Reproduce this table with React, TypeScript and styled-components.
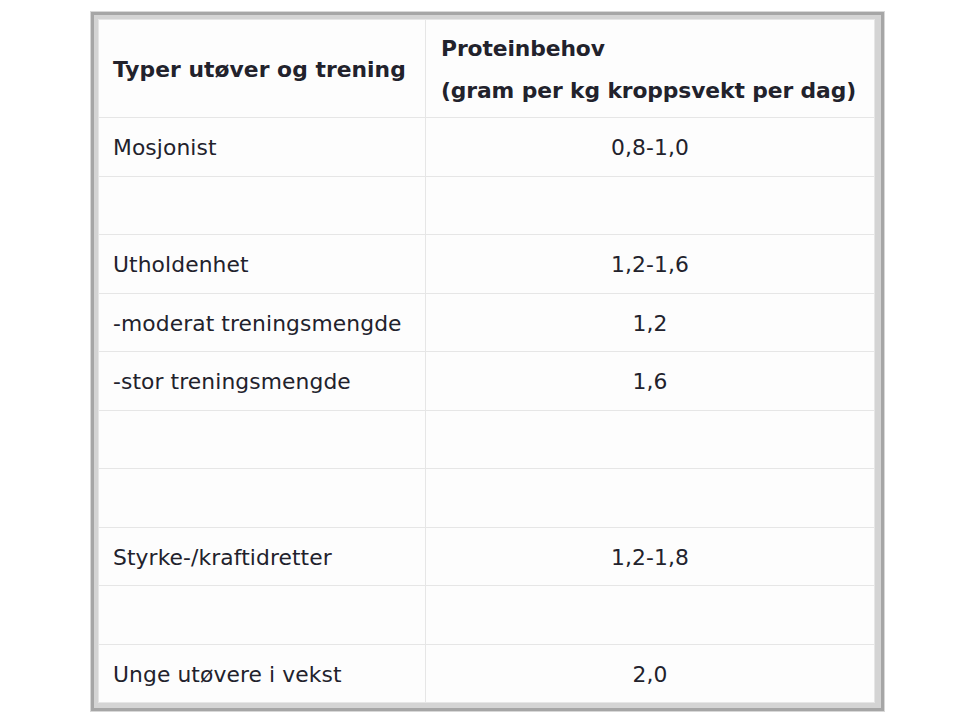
import React from "react";
import styled, { createGlobalStyle } from "styled-components";

const Global = createGlobalStyle`
  html, body { margin: 0; padding: 0; background: #ffffff; }
  body { font-family: "DejaVu Sans", Verdana, sans-serif; }
`;

const Page = styled.div`
  width: 960px;
  height: 720px;
  padding: 12px 0 0 91px;
  box-sizing: border-box;
`;

const Frame = styled.div`
  display: inline-block;
  border: 3px solid #a6a6a6;
  padding: 4px 6px 5px 4px;
  background: #d4d4d4;
  box-shadow: 0 0 0 1px #d8d8d8;
`;

const Grid = styled.div`
  width: 777px;
  height: 684px;
  box-sizing: border-box;
  display: grid;
  grid-template-columns: 327px 1fr;
  grid-template-rows: 98px repeat(10, 1fr);
  background: #fdfdfd;
  border-left: 1px solid #e6e6e6;
  border-top: 1px solid #e6e6e6;
`;

const Cell = styled.div<{ $center?: boolean; $head?: boolean }>`
  display: flex;
  flex-direction: column;
  justify-content: center;
  align-items: ${(p) => (p.$center ? "center" : "flex-start")};
  padding: 3px 14px 0;
  border-right: 1px solid #e6e6e6;
  border-bottom: 1px solid #e6e6e6;
  font-size: 21.8px;
  font-weight: ${(p) => (p.$head ? 700 : 400)};
  letter-spacing: ${(p) => (p.$head ? "0.05px" : "0.1px")};
  color: #22222c;
  line-height: 42px;
  white-space: nowrap;
`;

const HeadRight = styled(Cell)`
  padding-left: 15px;
  letter-spacing: -0.1px;
`;

const rows: [string, string][] = [
  ["Mosjonist", "0,8-1,0"],
  ["", ""],
  ["Utholdenhet", "1,2-1,6"],
  ["-moderat treningsmengde", "1,2"],
  ["-stor treningsmengde", "1,6"],
  ["", ""],
  ["", ""],
  ["Styrke-/kraftidretter", "1,2-1,8"],
  ["", ""],
  ["Unge utøvere i vekst", "2,0"],
];

export default function App() {
  return (
    <>
      <Global />
      <Page>
        <Frame>
          <Grid>
            <Cell $head>Typer utøver og trening</Cell>
            <HeadRight $head>
              <span>Proteinbehov</span>
              <span>(gram per kg kroppsvekt per dag)</span>
            </HeadRight>
            {rows.map(([a, b], i) => (
              <React.Fragment key={i}>
                <Cell>{a}</Cell>
                <Cell $center>{b}</Cell>
              </React.Fragment>
            ))}
          </Grid>
        </Frame>
      </Page>
    </>
  );
}
